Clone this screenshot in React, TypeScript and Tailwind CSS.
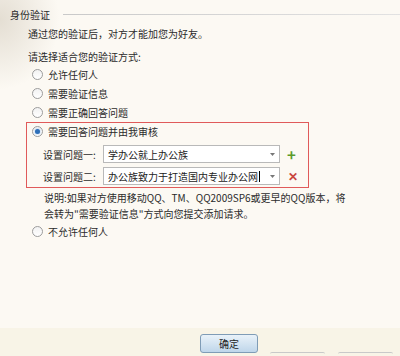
import React from 'react';

const Radio: React.FC<{ checked?: boolean }> = ({ checked }) => (
  <span className="flex h-[11px] w-[11px] shrink-0 items-center justify-center rounded-full border border-[#9c9c9c] bg-gradient-to-b from-[#f2f2f2] to-[#ffffff]">
    {checked && <span className="h-[5px] w-[5px] rounded-full bg-[#2e6fb8] shadow-[0_0_2px_#7fb0e6]" />}
  </span>
);

const RadioRow: React.FC<{ label: string; checked?: boolean; className?: string }> = ({ label, checked, className }) => (
  <div className={`flex h-[19px] items-center gap-[5px] pl-[32px] ${className ?? ''}`}>
    <Radio checked={checked} />
    <span>{label}</span>
  </div>
);

const Combo: React.FC<{ value: string; caret?: boolean }> = ({ value, caret }) => (
  <div className="flex h-[18px] w-[177px] items-center border border-[#b9b9b9] bg-white">
    <span className="flex-1 overflow-hidden whitespace-nowrap pl-[4px] text-[#222]">
      {value}
      {caret && <span className="ml-[1px] inline-block h-[11px] w-px translate-y-[1px] bg-black" />}
    </span>
    <span className="flex w-[14px] items-center justify-center">
      <svg width="5" height="3" viewBox="0 0 5 3">
        <path d="M0 0h5L2.5 3z" fill="#777" />
      </svg>
    </span>
  </div>
);

export default function App() {
  return (
    <div
      className="relative flex h-[356px] w-[400px] flex-col overflow-hidden bg-[#fcf9f3] text-[10px] text-[#2b2b2b]"
      style={{ fontFamily: '"Noto Sans CJK SC", "Noto Sans", sans-serif' }}
    >
      <div className="pointer-events-none absolute left-0 top-0 h-[90px] w-[60px] bg-[radial-gradient(ellipse_at_0_20px,#e4ded3,transparent_70%)]" />

      <div className="relative flex-1">
        <div className="flex h-[20px] items-center pl-[10px] mt-[4px]">
          <span>身份验证</span>
          <span className="ml-[13px] h-px flex-1 bg-gradient-to-r from-[#c9c9c9] to-[#e2e2e2]" />
        </div>
        <div className="flex h-[18px] items-center pl-[28px]">通过您的验证后，对方才能加您为好友。</div>
        <div className="mt-[5px] flex h-[18px] items-center pl-[28px]">请选择适合您的验证方式:</div>

        <RadioRow label="允许任何人" />
        <RadioRow label="需要验证信息" />
        <RadioRow label="需要正确回答问题" />

        <div className="ml-[26px] w-[283px] border border-[#e05a5a] pb-[2px]">
          <div className="flex h-[17px] items-center gap-[5px] pl-[5px]">
            <Radio checked />
            <span>需要回答问题并由我审核</span>
          </div>
          <div className="mt-[5px] flex items-center pl-[16px]">
            <span className="w-[60px]">设置问题一:</span>
            <Combo value="学办公就上办公族" />
            <span className="ml-[7px] text-[15px] font-bold leading-none text-[#5b9a2c]">+</span>
          </div>
          <div className="mt-[4px] flex items-center pl-[16px]">
            <span className="w-[60px]">设置问题二:</span>
            <Combo value="办公族致力于打造国内专业办公网" caret />
            <span className="ml-[8px] text-[12px] font-bold leading-none text-[#c9463d]">✕</span>
          </div>
        </div>

        <div className="mt-[2px] pl-[44px] leading-[16px]">
          <div>说明:如果对方使用移动QQ、TM、QQ2009SP6或更早的QQ版本，将</div>
          <div>会转为"需要验证信息"方式向您提交添加请求。</div>
        </div>
        <RadioRow label="不允许任何人" className="h-[18px]" />
      </div>

      <div className="relative flex h-[28px] items-start bg-[#f8f4e7]">
        <button className="ml-[200px] mt-[6px] flex h-[19px] w-[58px] items-center justify-center rounded-[3px] border border-[#7f9cb6] bg-gradient-to-b from-[#e9f2f9] to-[#bfd6ea] text-[#1d1d1d]">
          确定
        </button>
        <span className="ml-[12px] mt-[24px] h-[6px] w-[55px] rounded-t-[2px] border-t border-[#c9c9c9]" />
        <span className="ml-[13px] mt-[24px] h-[6px] w-[55px] rounded-t-[2px] border-t border-[#c9c9c9]" />
      </div>
    </div>
  );
}
